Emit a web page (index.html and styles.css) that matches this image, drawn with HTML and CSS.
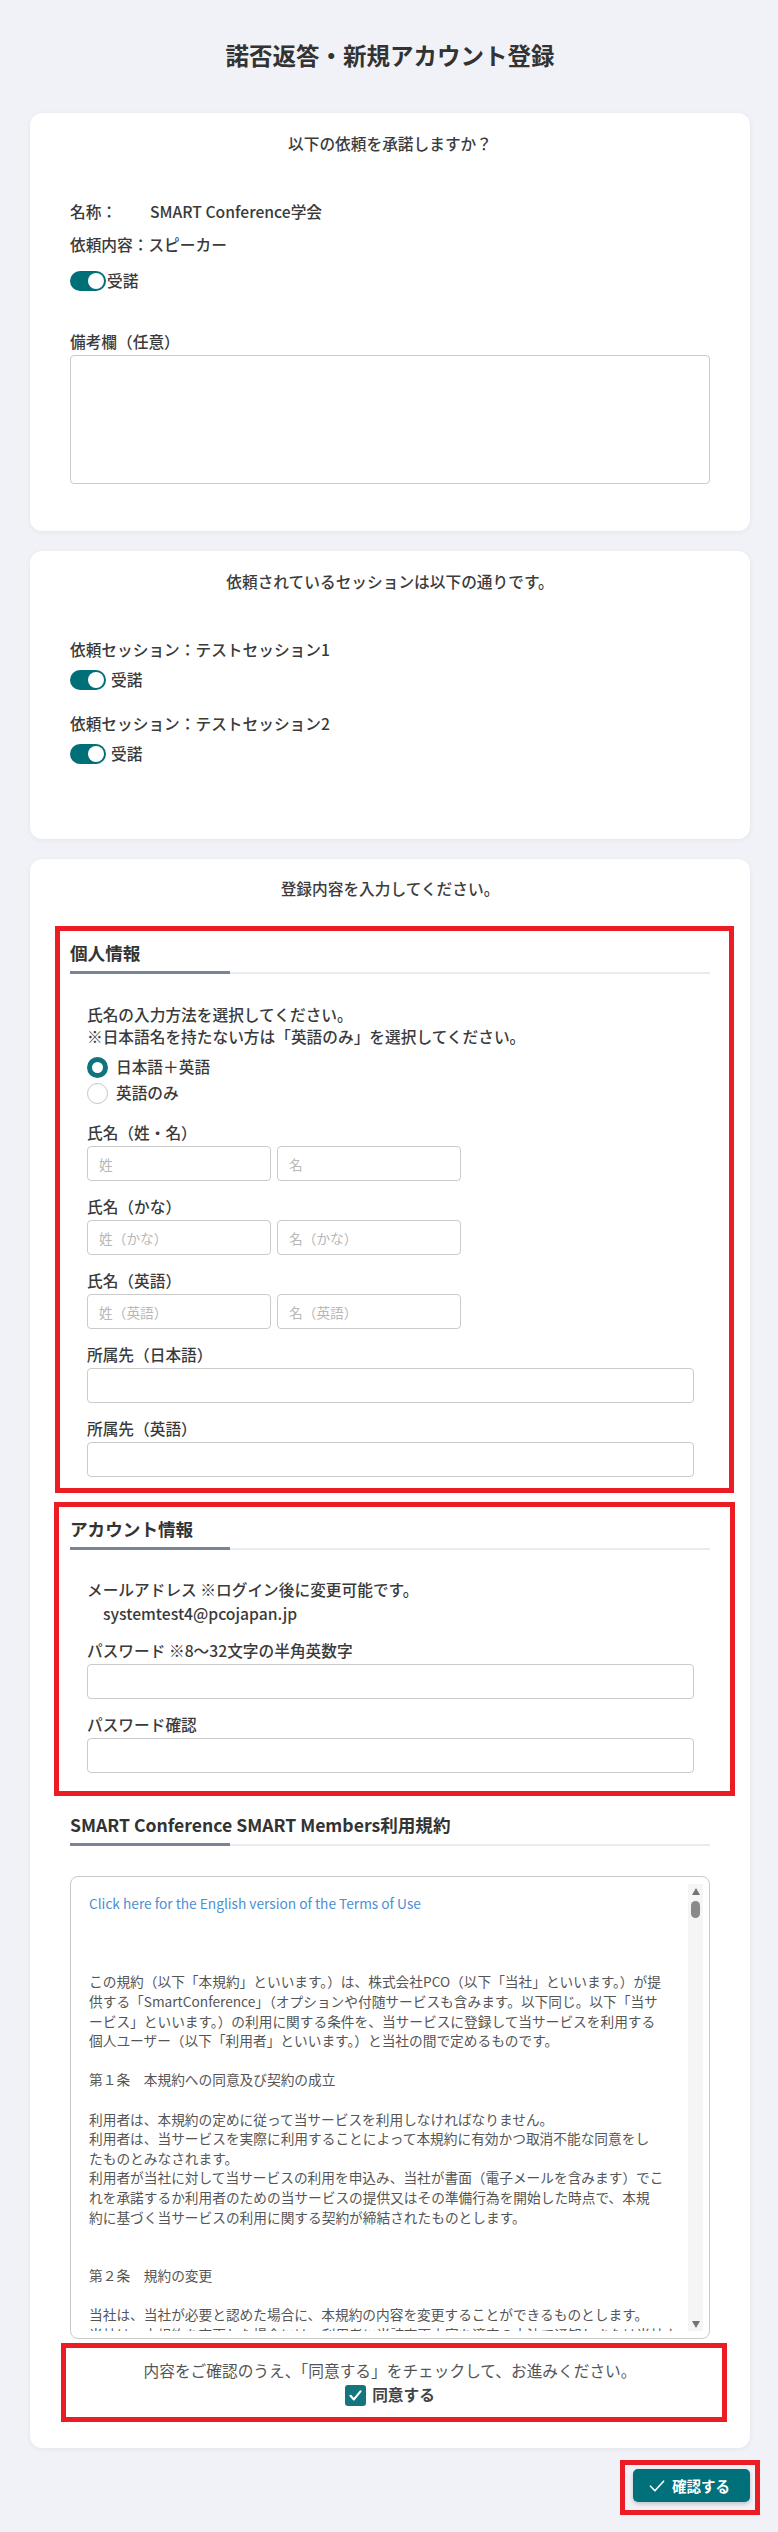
FILE: index.html
```html
<!DOCTYPE html>
<html lang="ja">
<head>
<meta charset="utf-8">
<title>諾否返答・新規アカウント登録</title>
<link rel="stylesheet" href="styles.css">
</head>
<body>
<main class="page">
  <h1 class="page-title">諾否返答・新規アカウント登録</h1>

  <section class="card card-request">
    <p class="card-lead">以下の依頼を承諾しますか？</p>
    <div class="request-info">
      <p class="info-line"><span class="info-key">名称：</span>SMART Conference学会</p>
      <p class="info-line info-line-next">依頼内容：スピーカー</p>
    </div>
    <label class="switch-row switch-row-request"><span class="switch"></span>受諾</label>
    <label class="field-label remarks-label" for="remarks">備考欄（任意）</label>
    <textarea id="remarks" class="remarks"></textarea>
  </section>

  <section class="card card-sessions">
    <p class="card-lead">依頼されているセッションは以下の通りです。</p>
    <div class="session">
      <p class="session-name">依頼セッション：テストセッション1</p>
      <label class="switch-row switch-row-session"><span class="switch"></span>受諾</label>
    </div>
    <div class="session">
      <p class="session-name">依頼セッション：テストセッション2</p>
      <label class="switch-row switch-row-session"><span class="switch"></span>受諾</label>
    </div>
  </section>

  <section class="card card-register">
    <p class="card-lead">登録内容を入力してください。</p>

    <div class="hl hl-personal">
      <h2 class="sec-title">個人情報</h2>
      <div class="sec-body">
        <p class="intro">氏名の入力方法を選択してください。<br>※日本語名を持たない方は「英語のみ」を選択してください。</p>
        <div class="radio-group">
          <label class="radio-row"><span class="radio is-checked"></span>日本語＋英語</label>
          <label class="radio-row"><span class="radio"></span>英語のみ</label>
        </div>
        <div class="field field-first">
          <p class="field-label">氏名（姓・名）</p>
          <div class="name-pair">
            <input class="input" type="text" placeholder="姓">
            <input class="input" type="text" placeholder="名">
          </div>
        </div>
        <div class="field">
          <p class="field-label">氏名（かな）</p>
          <div class="name-pair">
            <input class="input" type="text" placeholder="姓（かな）">
            <input class="input" type="text" placeholder="名（かな）">
          </div>
        </div>
        <div class="field">
          <p class="field-label">氏名（英語）</p>
          <div class="name-pair">
            <input class="input" type="text" placeholder="姓（英語）">
            <input class="input" type="text" placeholder="名（英語）">
          </div>
        </div>
        <div class="field">
          <p class="field-label">所属先（日本語）</p>
          <input class="input input-wide" type="text">
        </div>
        <div class="field">
          <p class="field-label">所属先（英語）</p>
          <input class="input input-wide" type="text">
        </div>
      </div>
    </div>

    <div class="hl hl-account">
      <h2 class="sec-title">アカウント情報</h2>
      <div class="sec-body">
        <p class="field-label email-label">メールアドレス ※ログイン後に変更可能です。</p>
        <p class="email-value">systemtest4@pcojapan.jp</p>
        <div class="field field-password">
          <p class="field-label">パスワード ※8〜32文字の半角英数字</p>
          <input class="input input-wide" type="password">
        </div>
        <div class="field">
          <p class="field-label">パスワード確認</p>
          <input class="input input-wide" type="password">
        </div>
      </div>
    </div>

    <h2 class="sec-title terms-title">SMART Conference SMART Members利用規約</h2>
    <div class="terms">
      <div class="terms-text">
        <p class="terms-link"><a href="#">Click here for the English version of the Terms of Use</a></p>
        <p>この規約（以下「本規約」といいます。）は、株式会社PCO（以下「当社」といいます。）が提<br>供する「SmartConference」（オプションや付随サービスも含みます。以下同じ。以下「当サ<br>ービス」といいます。）の利用に関する条件を、当サービスに登録して当サービスを利用する<br>個人ユーザー（以下「利用者」といいます。）と当社の間で定めるものです。</p>
        <p>第１条　本規約への同意及び契約の成立</p>
        <p class="gap-2">利用者は、本規約の定めに従って当サービスを利用しなければなりません。<br>利用者は、当サービスを実際に利用することによって本規約に有効かつ取消不能な同意をし<br>たものとみなされます。<br>利用者が当社に対して当サービスの利用を申込み、当社が書面（電子メールを含みます）でこ<br>れを承諾するか利用者のための当サービスの提供又はその準備行為を開始した時点で、本規<br>約に基づく当サービスの利用に関する契約が締結されたものとします。</p>
        <p>第２条　規約の変更</p>
        <p class="terms-last">当社は、当社が必要と認めた場合に、本規約の内容を変更することができるものとします。<br>当社は、本規約を変更した場合には、利用者に当該変更内容を適宜の方法で通知しまたは当社ウェブサイト上に掲載するものとします。</p>
      </div>
      <div class="scrollbar" aria-hidden="true">
        <span class="sb-arrow sb-up"></span>
        <span class="sb-thumb"></span>
        <span class="sb-arrow sb-down"></span>
      </div>
    </div>

    <div class="hl hl-agree">
      <p class="agree-note">内容をご確認のうえ、「同意する」をチェックして、お進みください。</p>
      <label class="agree-check">
        <span class="checkbox"><svg viewBox="0 0 21 21" width="21" height="21" aria-hidden="true"><path d="M5.5 10.8l3.4 3.6 6.6-8" fill="none" stroke="#fff" stroke-width="2.2" stroke-linecap="round" stroke-linejoin="round"/></svg></span>同意する
      </label>
    </div>
  </section>

  <div class="actions">
    <div class="hl hl-action">
      <button class="btn-confirm" type="button"><svg viewBox="0 0 16 16" width="16" height="16" aria-hidden="true"><path d="M1.5 8.2l4.4 4.6L14.6 3.2" fill="none" stroke="#fff" stroke-width="1.6" stroke-linecap="round" stroke-linejoin="round"/></svg>確認する</button>
    </div>
  </div>
</main>
</body>
</html>
```

FILE: styles.css
```css
html, body {
  margin: 0;
  background: #f1f2f7;
}

body {
  font-family: "Noto Sans CJK JP", "Noto Sans", sans-serif;
  color: #3a3a3a;
  font-size: 15.7px;
  line-height: 24px;
}

p {
  margin: 0;
}

.page {
  padding: 38px 28px 16px 30px;
}

.page-title {
  margin: 0;
  text-align: center;
  font-size: 23.5px;
  line-height: 34px;
  font-weight: 700;
  color: #333;
}

/* cards */
.card {
  background: #fff;
  border-radius: 12px;
  box-shadow: 0 1px 5px rgba(40, 50, 90, 0.07);
  padding: 19px 40px 47px;
}

.card-request {
  margin-top: 41px;
}

.card + .card {
  margin-top: 20px;
}

.card-sessions {
  padding-bottom: 73px;
}

.card-register {
  padding-top: 18px;
  padding-bottom: 26px;
}

.card-lead {
  text-align: center;
  font-weight: 500;
  color: #3c3c3c;
}

/* request card */
.request-info {
  margin-top: 44px;
  font-weight: 500;
}

.info-key {
  display: inline-block;
  width: 80px;
}

.info-line-next {
  margin-top: 9px;
}

.switch-row {
  display: flex;
  align-items: center;
  gap: 3px;
  height: 24px;
  font-weight: 500;
}

.switch-row-request {
  margin-top: 12px;
  gap: 1px;
}

.switch-row-session {
  margin-top: 6px;
  gap: 5px;
}

.switch {
  box-sizing: border-box;
  width: 36px;
  height: 20px;
  border-radius: 10px;
  background: #006f78;
  display: flex;
  align-items: center;
  justify-content: flex-end;
  padding: 0 2px;
}

.switch::after {
  content: "";
  width: 16px;
  height: 16px;
  border-radius: 50%;
  background: #fff;
}

.field-label {
  display: block;
  font-weight: 500;
  color: #3a3a3a;
}

.remarks-label {
  margin-top: 37px;
}

.remarks {
  display: block;
  box-sizing: border-box;
  width: 100%;
  height: 129px;
  margin: 1px 0 0;
  border: 1px solid #cbcbcb;
  border-radius: 4px;
  resize: none;
  font: inherit;
}

/* sessions */
.session-name {
  font-weight: 500;
}

.session:first-of-type {
  margin-top: 44px;
}

.session + .session {
  margin-top: 20px;
}

/* highlighted (annotated) blocks */
.hl {
  border: 5px solid #ec1c24;
}

.hl-personal {
  margin: 25px -24px 0 -15px;
  padding: 9px 19px 11px 10px;
}

.hl-account {
  margin: 9px -25px 0 -16px;
  padding: 9px 20px 18px 11px;
}

.hl-agree {
  margin: 4px -17px 0 -9px;
  padding: 11px 12px 10px 4px;
}

.hl-action {
  margin-right: -10px;
  padding: 4px 5px 8px 8px;
}

/* section titles with two-tone underline */
.sec-title {
  margin: 0;
  font-size: 17.6px;
  line-height: 26px;
  font-weight: 700;
  color: #333;
  padding-bottom: 8px;
  background:
    linear-gradient(#7a8498, #7a8498) left bottom / 160px 3px no-repeat,
    linear-gradient(#e8ebf0, #e8ebf0) left bottom / 100% 2px no-repeat;
}

.sec-body {
  padding: 0 16px 0 17px;
}

.intro {
  margin-top: 30px;
  line-height: 22px;
  font-weight: 500;
}

.radio-group {
  margin-top: 6px;
}

.radio-row {
  display: flex;
  align-items: center;
  gap: 8px;
  height: 26px;
  font-weight: 500;
}

.radio {
  box-sizing: border-box;
  width: 21px;
  height: 21px;
  border-radius: 50%;
  border: 1px solid #c4c4c4;
  background: #fff;
}

.radio.is-checked {
  border: 5px solid #0f747c;
}

.field {
  margin-top: 14px;
}

.field-first {
  margin-top: 15px;
}

.field .field-label {
  margin-bottom: 1px;
}

.name-pair {
  display: flex;
  gap: 6px;
}

.input {
  display: block;
  box-sizing: border-box;
  height: 35px;
  width: 184px;
  margin: 0;
  border: 1px solid #cbcbcb;
  border-radius: 4px;
  padding: 0 11px;
  background: #fff;
  font-family: inherit;
  font-size: 13.7px;
  color: #333;
}

.input::placeholder {
  color: #b8b8b8;
}

.input-wide {
  width: 100%;
}

.email-label {
  margin-top: 28px;
}

.email-value {
  padding-left: 16px;
  font-weight: 500;
}

.field-password {
  margin-top: 13px;
}

/* terms */
.terms-title {
  margin-top: 16px;
}

.terms {
  display: flex;
  margin-top: 30px;
  border: 1px solid #c9c9c9;
  border-radius: 8px;
  padding: 7px 6px 7px 7px;
}

.terms-text {
  flex: 1;
  min-width: 0;
  height: 447px;
  overflow: hidden;
  padding: 10px 0 0 11px;
  box-sizing: border-box;
  font-size: 13.7px;
  line-height: 19.6px;
  color: #555;
  white-space: nowrap;
}

.terms-text p {
  margin-bottom: 19.6px;
}

.terms-text .terms-link {
  margin-bottom: 58.8px;
}

.terms-text .gap-2 {
  margin-bottom: 39.2px;
}

.terms-text .terms-last {
  margin-bottom: 0;
}

.terms-link a {
  color: #4b8fd5;
  text-decoration: none;
}

.scrollbar {
  flex: none;
  display: flex;
  flex-direction: column;
  align-items: center;
  width: 15px;
  height: 447px;
  background: #f5f5f5;
}

.sb-arrow {
  display: flex;
  align-items: center;
  justify-content: center;
  width: 15px;
  height: 14px;
}

.sb-arrow::before {
  content: "";
  border-left: 4px solid transparent;
  border-right: 4px solid transparent;
}

.sb-up::before {
  border-bottom: 7px solid #737373;
}

.sb-down {
  margin-top: auto;
}

.sb-down::before {
  border-top: 7px solid #737373;
}

.sb-thumb {
  margin-top: 3px;
  width: 9px;
  height: 17px;
  border-radius: 5px;
  background: #8a8a8a;
}

/* agreement */
.agree-note {
  text-align: center;
  color: #555;
}

.agree-check {
  display: flex;
  justify-content: center;
  align-items: center;
  gap: 6px;
  height: 24px;
  font-weight: 700;
  color: #444;
}

.checkbox {
  display: flex;
  width: 21px;
  height: 21px;
  border-radius: 3px;
  background: #13767e;
}

/* footer action */
.actions {
  display: flex;
  justify-content: flex-end;
  margin-top: 12px;
}

.btn-confirm {
  display: flex;
  align-items: center;
  justify-content: center;
  gap: 7px;
  width: 117px;
  height: 33px;
  padding: 0 4px 0 0;
  border: 0;
  border-radius: 5px;
  background: #00707a;
  box-shadow: 0 2px 4px rgba(0, 0, 0, 0.2);
  color: #fff;
  font-family: inherit;
  font-size: 14.5px;
  font-weight: 700;
}
```
